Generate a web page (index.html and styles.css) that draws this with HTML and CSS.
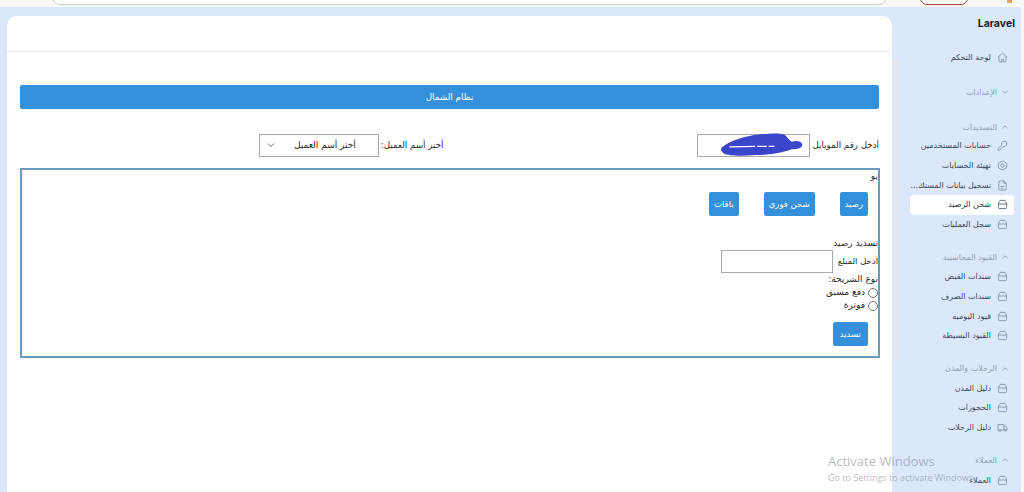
FILE: index.html
```html
<!DOCTYPE html>
<html lang="ar" dir="rtl">
<head>
  <meta charset="UTF-8" />
  <title>نظام الشمال</title>
  <link rel="stylesheet" href="styles.css">
</head>
<body>
  <svg class="defs" width="0" height="0" aria-hidden="true">
    <symbol id="i-box" viewBox="0 0 12 12"><path d="M1.5 5.5 2.6 2.6Q3 1.5 4 1.5h4q1 0 1.4 1.1l1.1 2.9v3.700q0 1.300-1.300 1.300H2.800q-1.300 0-1.300-1.300zM1.500 5.500h9" /></symbol>
    <symbol id="i-home" viewBox="0 0 12 12"><path d="M1 5.600 6 1.200l5 4.400M2.200 4.800v5q0 1 1 1h5.600q1 0 1-1v-5M4.800 10.800V8h2.400v2.800" /></symbol>
    <symbol id="i-key" viewBox="0 0 12 12"><path d="M7.800 1.200a3 3 0 0 1 3 3 3 3 0 0 1-4 2.800L2.800 11H1.200V9.200l4-4a3 3 0 0 1 2.600-4z" /></symbol>
    <symbol id="i-gear" viewBox="0 0 12 12"><path d="M6 1 10.500 3.500v5L6 11 1.500 8.500v-5z" /><circle cx="6" cy="6" r="1.800" /></symbol>
    <symbol id="i-file" viewBox="0 0 12 12"><path d="M7.500 1H3q-1 0-1 1v8q0 1 1 1h6q1 0 1-1V3.500zM7.500 1v2.500H10M4 7h4M4 9h2.500" /></symbol>
    <symbol id="i-truck" viewBox="0 0 12 12"><path d="M7.500 8.800H4.500M2 8.800H1V2.800h6.500v6M7.500 4.500h2l1.500 2v2.300h-1" /><circle cx="3.200" cy="9" r="1.200" /><circle cx="8.800" cy="9" r="1.200" /></symbol>
    <symbol id="i-up" viewBox="0 0 8 8"><path d="M1.500 5.200 4 2.800l2.500 2.400" /></symbol>
    <symbol id="i-down" viewBox="0 0 8 8"><path d="M1.500 2.800 4 5.200l2.500-2.400" /></symbol>
  </svg>

  <div class="chrome">
    <div class="chrome-orange"></div>
    <div class="chrome-pill"></div>
    <div class="chrome-url"></div>
  </div>

  <div class="app">
    <aside class="sidebar">
      <div class="brand" dir="ltr">Laravel</div>

      <a class="nav-item nav-home"><svg class="ic"><use href="#i-home" /></svg><span>لوحة التحكم</span></a>

      <div class="nav-head head-settings"><svg class="chev"><use href="#i-down" /></svg><span>الإعدادات</span></div>

      <div class="nav-head head-group"><svg class="chev"><use href="#i-up" /></svg><span>التسديدات</span></div>
      <a class="nav-item"><svg class="ic"><use href="#i-key" /></svg><span>حسابات المستخدمين</span></a>
      <a class="nav-item"><svg class="ic"><use href="#i-gear" /></svg><span>تهيئة الحسابات</span></a>
      <a class="nav-item"><svg class="ic"><use href="#i-file" /></svg><span>تسجيل بيانات المستك...</span></a>
      <a class="nav-item active"><svg class="ic"><use href="#i-box" /></svg><span>شحن الرصيد</span></a>
      <a class="nav-item"><svg class="ic"><use href="#i-box" /></svg><span>سجل العمليات</span></a>

      <div class="nav-head head-group"><svg class="chev"><use href="#i-up" /></svg><span>القيود المحاسبية</span></div>
      <a class="nav-item"><svg class="ic"><use href="#i-box" /></svg><span>سندات القبض</span></a>
      <a class="nav-item"><svg class="ic"><use href="#i-box" /></svg><span>سندات الصرف</span></a>
      <a class="nav-item"><svg class="ic"><use href="#i-box" /></svg><span>قيود اليوميه</span></a>
      <a class="nav-item"><svg class="ic"><use href="#i-box" /></svg><span>القيود البسيطة</span></a>

      <div class="nav-head head-group"><svg class="chev"><use href="#i-up" /></svg><span>الرحلات والمدن</span></div>
      <a class="nav-item"><svg class="ic"><use href="#i-box" /></svg><span>دليل المدن</span></a>
      <a class="nav-item"><svg class="ic"><use href="#i-box" /></svg><span>الحجوزات</span></a>
      <a class="nav-item"><svg class="ic"><use href="#i-truck" /></svg><span>دليل الرحلات</span></a>

      <div class="nav-head head-group"><svg class="chev"><use href="#i-up" /></svg><span>العملاء</span></div>
      <a class="nav-item"><svg class="ic"><use href="#i-box" /></svg><span>العملاء</span></a>
    </aside>

    <div class="scroll-strip"></div>

    <main class="card">
      <div class="card-top"></div>
      <div class="card-body">
        <div class="title-bar">نظام الشمال</div>

        <div class="lookup">
          <label class="lookup-phone">أدخل رقم الموبايل
            <span class="phone-wrap">
              <input class="field phone" type="text" />
              <svg class="scribble" width="84" height="24" viewBox="0 0 86 25"><path d="M1 15C8 9 20 5 30 3 40 1 55 0 64 1 69 2 70 7 74 9 78 8 84 8 85 12 85 16 80 17 74 17 66 20 52 23 36 23 22 24 8 24 3 21 0 19 0 17 1 15z" fill="#3b45c9" /><path d="M9 14.500 36 14M38 14h10M50 14h6" stroke="#fff" stroke-width="1.300" fill="none" /></svg>
            </span>
          </label>
          <label class="lookup-client">أختر أسم العميل:
            <span class="select-box"><span>أختر أسم العميل</span><svg class="select-chev"><use href="#i-down" /></svg></span>
          </label>
        </div>

        <section class="panel">
          <div class="panel-tag">يو</div>
          <div class="tabs">
            <button class="btn">رصيد</button>
            <button class="btn">شحن فوري</button>
            <button class="btn">باقات</button>
          </div>
          <div class="pay-title">تسديد رصيد</div>
          <label class="amount-row">ادخل المبلغ <input class="field amount" type="text" /></label>
          <div class="sim-title">نوع الشريحة:</div>
          <label class="radio-row"><input type="radio" name="sim" />دفع مسبق</label>
          <label class="radio-row"><input type="radio" name="sim" />فوترة</label>
          <button class="btn btn-pay">تسديد</button>
        </section>
      </div>
    </main>
  </div>

  <div class="watermark" dir="ltr">
    <div class="wm-big">Activate Windows</div>
    <div class="wm-small">Go to Settings to activate Windows.</div>
  </div>
</body>
</html>
```

FILE: styles.css
```css
body {
  margin: 0;
  height: 492px;
  overflow: hidden;
  background: #f9f8f7;
  font-family: "DejaVu Sans", sans-serif;
  color: #222;
  position: relative;
}

.defs {
  position: absolute;
}

.chrome {
  height: 7px;
  display: flex;
  align-items: flex-end;
  overflow: hidden;
}

.chrome-orange {
  width: 5px;
  height: 3px;
  margin: 0 12px 0 39px;
  align-self: flex-start;
  background: #e9a45c;
  flex: none;
}

.chrome-pill {
  width: 48px;
  height: 14px;
  margin-left: 33px;
  margin-bottom: 2px;
  border: 1px solid #a04848;
  border-radius: 8px;
  box-sizing: border-box;
  flex: none;
}

.chrome-url {
  width: 835px;
  height: 16px;
  margin-bottom: 2px;
  box-sizing: border-box;
  background: #fff;
  border: 1px solid #cfcfcf;
  border-radius: 10px;
  flex: none;
}

.app {
  width: 1021px;
  height: 485px;
  margin-right: 3px;
  background: #dbe8fc;
  display: flex;
  border-radius: 0 4px 0 0;
}

.sidebar {
  width: 122px;
  flex: none;
  padding: 9px 0 0 0;
  box-sizing: border-box;
}

.brand {
  font-family: "Inter", sans-serif;
  font-weight: 700;
  font-size: 10.500px;
  line-height: 16px;
  text-align: right;
  padding-right: 6px;
  color: #1c1c1c;
}

.nav-item,
.nav-head {
  display: flex;
  align-items: center;
  height: 19.600px;
  font-size: 8px;
  white-space: nowrap;
  padding-right: 6px;
  margin-right: 7px;
  margin-left: 11px;
  border-radius: 4px;
}

.nav-item {
  color: #3c4657;
}

.nav-item span {
  margin-right: 6px;
}

.nav-item.active {
  background: #fff;
  color: #2c3442;
}

.nav-home {
  margin-top: 16px;
}

.nav-head {
  color: #929cab;
  padding-right: 5px;
}

.nav-head span {
  margin-right: 4px;
}

.head-settings {
  margin-top: 15px;
}

.head-group {
  margin-top: 13px;
  height: 20px;
}

.head-settings + .head-group {
  margin-top: 16px;
  height: 18px;
}

.ic {
  width: 11px;
  height: 11px;
  flex: none;
  fill: none;
  stroke: #7f8a9c;
  stroke-width: 0.900;
}

.active .ic {
  stroke: #4d5a70;
}

.chev {
  width: 8px;
  height: 8px;
  flex: none;
  fill: none;
  stroke: #8d97a6;
  stroke-width: 0.800;
}

.scroll-strip {
  width: 7px;
  height: 300px;
  margin-top: 53px;
  background: #e2e8f2;
  flex: none;
}

.card {
  width: 885px;
  flex: none;
  margin-top: 9px;
  background: #fff;
  border-radius: 10px 10px 0 0;
}

.card-top {
  height: 35px;
  border-bottom: 1px solid #ececec;
}

.card-body {
  padding: 33px 13px 0 13px;
}

.title-bar {
  height: 24px;
  line-height: 24px;
  background: #3590dc;
  color: #fff;
  font-size: 8.800px;
  text-align: center;
  border-radius: 2px;
}

.lookup {
  display: flex;
  align-items: center;
  height: 24px;
  margin-top: 24px;
  font-size: 8.700px;
  color: #2a2a2a;
}

.lookup label {
  display: flex;
  align-items: center;
  gap: 2px;
}

.lookup-client {
  margin-right: 254px;
}

.phone-wrap {
  position: relative;
  display: block;
  height: 23px;
}

.field {
  display: block;
  box-sizing: border-box;
  height: 23px;
  border: 1px solid #aaa;
  background: #fff;
  padding: 0;
  margin: 0;
}

.phone {
  width: 113px;
}

.scribble {
  position: absolute;
  top: -1px;
  left: 23px;
}

.select-box {
  width: 120px;
  height: 23px;
  box-sizing: border-box;
  border: 1px solid #aaa;
  display: flex;
  align-items: center;
  justify-content: space-between;
  padding: 0 22px 0 6px;
  font-size: 9px;
}

.select-chev {
  width: 10px;
  height: 10px;
  fill: none;
  stroke: #555;
  stroke-width: 0.700;
}

.panel {
  height: 190px;
  box-sizing: border-box;
  margin-top: 11px;
  margin-right: -1px;
  border: 2px solid #6b9db8;
  font-size: 9px;
  line-height: 13px;
  color: #2a2a2a;
}

.panel-tag {
  height: 13px;
}

.tabs {
  display: flex;
  gap: 25px;
  margin: 9px 10px 0 0;
}

.btn {
  height: 24px;
  padding: 0 5px;
  border: 0;
  border-radius: 2px;
  background: #3590dc;
  color: #fff;
  font-family: "DejaVu Sans", sans-serif;
  font-size: 8.500px;
}

.pay-title {
  margin-top: 21px;
}

.amount-row {
  display: flex;
  align-items: center;
  gap: 5px;
  height: 23px;
  font-size: 8.500px;
}

.amount {
  width: 112px;
}

.radio-row {
  display: flex;
  align-items: center;
  height: 13px;
}

.radio-row input {
  width: 10px;
  height: 10px;
  margin: 0 0 0 3px;
}

.btn-pay {
  display: block;
  margin: 10px 10px 0 0;
  padding: 0 7px;
}

.watermark {
  position: absolute;
  left: 828px;
  top: 453px;
  color: rgba(120, 125, 135, 0.55);
  font-family: "Open Sans", sans-serif;
  white-space: nowrap;
}

.wm-big {
  font-size: 13px;
  line-height: 17px;
}

.wm-small {
  font-size: 9px;
  line-height: 16px;
}
```
